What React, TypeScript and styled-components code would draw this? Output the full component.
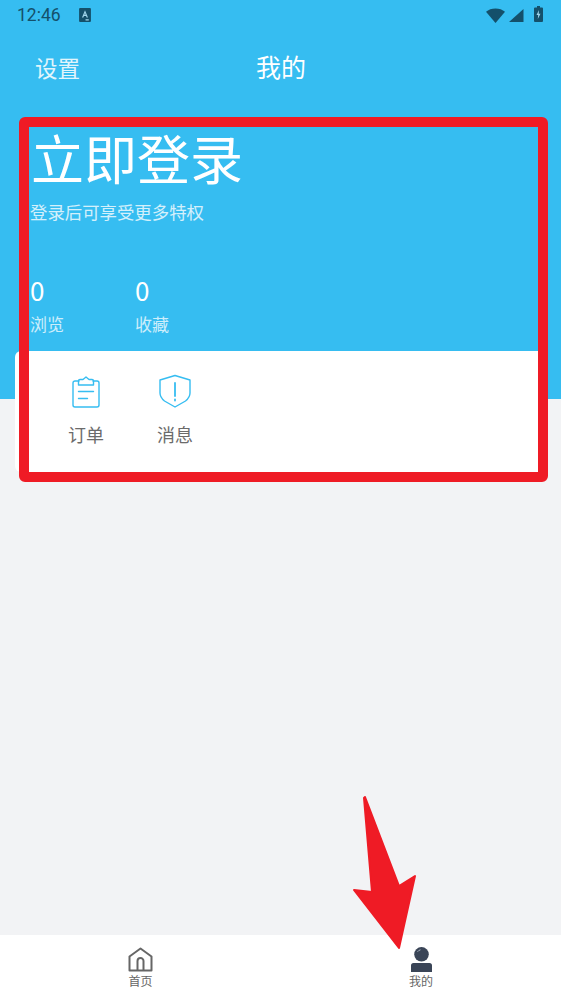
import React from "react";
import styled, { createGlobalStyle } from "styled-components";

const Global = createGlobalStyle`
  html, body { margin: 0; padding: 0; }
  body { font-family: Roboto, "Noto Sans CJK SC", sans-serif; }
`;

const Page = styled.div`
  position: relative;
  width: 561px;
  height: 997px;
  overflow: hidden;
  display: flex;
  flex-direction: column;
  background: linear-gradient(#36bdf1 399px, #f2f3f5 399px);
`;

const Main = styled.main`
  flex: 1;
  min-height: 0;
`;

const StatusBar = styled.div`
  height: 30px;
  padding: 0 17px;
  box-sizing: border-box;
  display: flex;
  align-items: center;
  color: #14506b;
`;

const Time = styled.span`
  font: 400 17.5px/30px Roboto, sans-serif;
  width: 62px;
`;

const StatusRight = styled.div`
  margin-left: auto;
  margin-right: 1px;
  display: flex;
  align-items: center;
`;

const NavBar = styled.div`
  height: 78px;
  padding: 0 35px;
  display: flex;
  align-items: center;
  color: #fff;
`;

const NavSide = styled.span`
  font-size: 22.5px;
  line-height: 30px;
  opacity: 0.85;
  width: 221px;
`;

const NavTitle = styled.span`
  font-size: 25px;
  line-height: 30px;
`;

const Profile = styled.section`
  padding: 23px 0 0 30px;
  height: 243px;
  box-sizing: border-box;
  color: #fff;
`;

const LoginTitle = styled.div`
  font-size: 53px;
  line-height: 62px;
  margin-left: 1px;
`;

const LoginHint = styled.div`
  font-size: 17.4px;
  line-height: 24px;
  margin-top: 8px;
  opacity: 0.78;
`;

const Stats = styled.div`
  display: flex;
  margin-top: 49px;
`;

const Stat = styled.div`
  width: 105px;
`;

const StatValue = styled.div`
  font: 400 26px/32px "Noto Sans CJK SC", sans-serif;
`;

const StatLabel = styled.div`
  font-size: 17px;
  line-height: 24px;
  margin-top: 7px;
  opacity: 0.75;
`;

const Card = styled.section`
  margin: 0 13px 0 15px;
  height: 121px;
  background: #fff;
  border-radius: 6px;
  display: flex;
  padding: 25px 0 0 50px;
  box-sizing: border-box;
  gap: 47px;
`;

const CardItem = styled.div`
  width: 42px;
  display: flex;
  flex-direction: column;
  align-items: center;
  color: #6b6b6b;
  font-size: 18px;
  line-height: 26px;
  gap: 15px;
`;

const BottomNav = styled.nav`
  height: 62px;
  background: #fff;
  display: grid;
  grid-template-columns: 281px 280px;
`;

const Tab = styled.div`
  display: flex;
  flex-direction: column;
  align-items: center;
  padding-top: 12px;
  color: #666;
  font-size: 12px;
  line-height: 16px;
  gap: 2px;
`;

const Highlight = styled.div`
  position: absolute;
  left: 19px;
  top: 117px;
  width: 529px;
  height: 365px;
  box-sizing: border-box;
  border: 10px solid #ef1b25;
  border-radius: 6px;
  pointer-events: none;
`;

const Arrow = styled.svg`
  position: absolute;
  left: 340px;
  top: 780px;
`;

export default function App() {
  return (
    <Page>
      <Global />
      <Main>
        <StatusBar>
          <Time>12:46</Time>
          <svg width="12" height="14" viewBox="0 0 11 13">
            <path fill="#14506b" d="M1 0h9a1 1 0 0 1 1 1v11a1 1 0 0 1-1 1H1a1 1 0 0 1-1-1V1a1 1 0 0 1 1-1z" />
            <path fill="#9fd4ea" d="M5.500 2 8.300 8.800H7l-.5-1.400H4.500L4 8.800H2.700zM5 6.300h1l-.5-1.700zM6 10.500h3v1H6z" />
          </svg>
          <StatusRight>
            <svg width="19" height="17" viewBox="0 0 18 16">
              <path fill="#14506b" d="M0 4.500C2.300 2.400 5.500 1.300 9 1.300s6.700 1.100 9 3.200L9 15z" />
            </svg>
            <svg width="15" height="15" viewBox="0 0 15 15" style={{ marginLeft: 4 }}>
              <path fill="#14506b" d="M14.500 1v13H0z" />
            </svg>
            <svg width="9" height="18" viewBox="0 0 9 16" style={{ marginLeft: 10, marginTop: -3 }}>
              <path fill="#14506b" d="M3 0h3v1.500h2a1 1 0 0 1 1 1V15a1 1 0 0 1-1 1H1a1 1 0 0 1-1-1V2.500a1 1 0 0 1 1-1h2z" />
              <path fill="#9fd4ea" d="M5 4 2.500 9h1.700L3.800 13l2.700-5.200H4.700z" />
            </svg>
          </StatusRight>
        </StatusBar>
        <NavBar>
          <NavSide>设置</NavSide>
          <NavTitle>我的</NavTitle>
        </NavBar>
        <Profile>
          <LoginTitle>立即登录</LoginTitle>
          <LoginHint>登录后可享受更多特权</LoginHint>
          <Stats>
            <Stat>
              <StatValue>0</StatValue>
              <StatLabel>浏览</StatLabel>
            </Stat>
            <Stat>
              <StatValue>0</StatValue>
              <StatLabel>收藏</StatLabel>
            </Stat>
          </Stats>
        </Profile>
        <Card>
          <CardItem>
            <svg width="28" height="32" viewBox="0 0 28 32" fill="none" stroke="#36bdf1" strokeWidth="1.400" strokeLinejoin="round" strokeLinecap="round">
              <path d="M7 5H3a2 2 0 0 0-2 2v22a2 2 0 0 0 2 2h22a2 2 0 0 0 2-2V7a2 2 0 0 0-2-2h-4" />
              <path d="M6.500 9V5a1.500 1.500 0 0 1 1.500-1.500h3L14 1l3 2.500h3A1.500 1.500 0 0 1 21.500 5v4z" />
              <path d="M6.500 15.500h15M6.500 22.500h9" />
            </svg>
            订单
          </CardItem>
          <CardItem>
            <svg width="32" height="34" viewBox="0 0 32 34" fill="none" stroke="#36bdf1" strokeWidth="1.400" strokeLinejoin="round" strokeLinecap="round" style={{ marginTop: -2 }}>
              <path d="M16 1.500 31 6v13c0 3.500-1.500 5.500-4.500 8L16 33 5.500 27C2.500 24.500 1 22.500 1 19V6z" />
              <path d="M16 9v13" strokeWidth="1.800" />
              <path d="M16 25.500v1" strokeWidth="1.800" />
            </svg>
            消息
          </CardItem>
        </Card>
      </Main>
      <BottomNav>
        <Tab>
          <svg width="25" height="25" viewBox="0 0 25 25" fill="none" stroke="#666" strokeWidth="2">
            <path d="M1.500 23.500V9.500L12.500 1.500l11 8v14z" strokeLinejoin="round" />
            <path d="M9.500 23.500V14a3 3 0 0 1 6 0v9.500" />
          </svg>
          首页
        </Tab>
        <Tab>
          <svg width="23" height="25" viewBox="0 0 23 25">
            <circle cx="11.500" cy="7.300" r="7.300" fill="#3a4557" />
            <path d="M7.500 4.800a5 5 0 0 1 3-2" stroke="#aab4c2" strokeWidth="1" fill="none" />
            <path d="M3.500 16h16a2.500 2.500 0 0 1 2.500 2.500V25H1v-6.500A2.500 2.500 0 0 1 3.500 16z" fill="#3a4557" />
          </svg>
          我的
        </Tab>
      </BottomNav>
      <Highlight />
      <Arrow width="100" height="180" viewBox="0 0 100 180">
        <path fill="#ef1b25" stroke="#ef1b25" strokeWidth="2" strokeLinejoin="round" d="M25 17 59 106 75 96 59 168 14 110 32 112 24 18z" />
      </Arrow>
    </Page>
  );
}
